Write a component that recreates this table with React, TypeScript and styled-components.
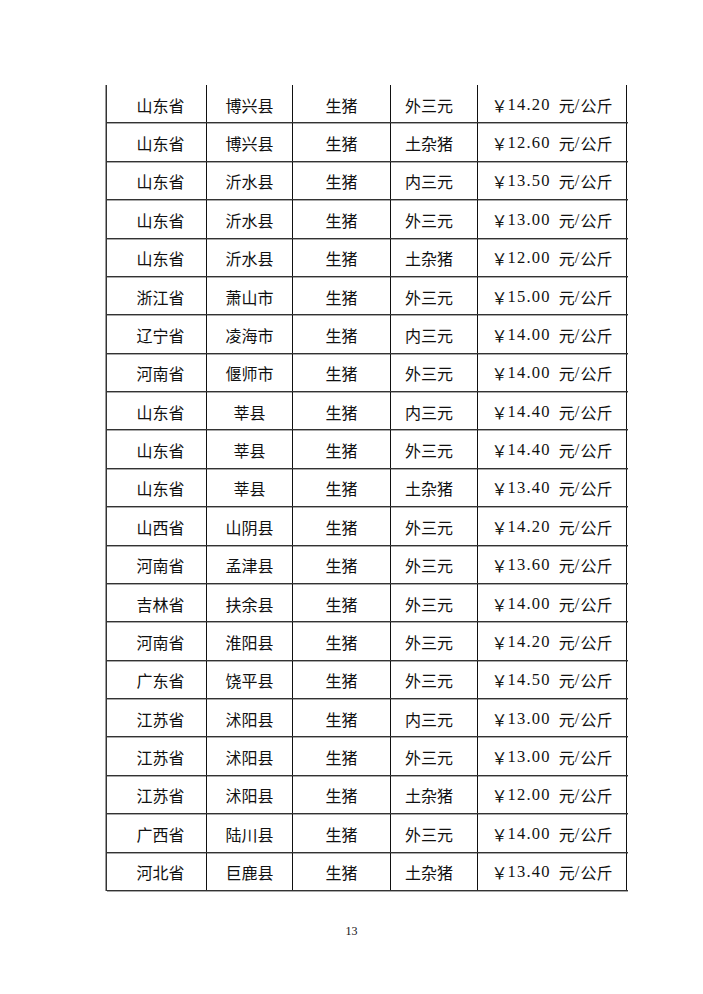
import styled, { createGlobalStyle } from "styled-components";

const GlobalStyle = createGlobalStyle`
  html, body {
    margin: 0;
    padding: 0;
    background: #ffffff;
  }
`;

type Row = [string, string, string, string, string];

const rows: Row[] = [
  ["山东省", "博兴县", "生猪", "外三元", "14.20"],
  ["山东省", "博兴县", "生猪", "土杂猪", "12.60"],
  ["山东省", "沂水县", "生猪", "内三元", "13.50"],
  ["山东省", "沂水县", "生猪", "外三元", "13.00"],
  ["山东省", "沂水县", "生猪", "土杂猪", "12.00"],
  ["浙江省", "萧山市", "生猪", "外三元", "15.00"],
  ["辽宁省", "凌海市", "生猪", "内三元", "14.00"],
  ["河南省", "偃师市", "生猪", "外三元", "14.00"],
  ["山东省", "莘县", "生猪", "内三元", "14.40"],
  ["山东省", "莘县", "生猪", "外三元", "14.40"],
  ["山东省", "莘县", "生猪", "土杂猪", "13.40"],
  ["山西省", "山阴县", "生猪", "外三元", "14.20"],
  ["河南省", "孟津县", "生猪", "外三元", "13.60"],
  ["吉林省", "扶余县", "生猪", "外三元", "14.00"],
  ["河南省", "淮阳县", "生猪", "外三元", "14.20"],
  ["广东省", "饶平县", "生猪", "外三元", "14.50"],
  ["江苏省", "沭阳县", "生猪", "内三元", "13.00"],
  ["江苏省", "沭阳县", "生猪", "外三元", "13.00"],
  ["江苏省", "沭阳县", "生猪", "土杂猪", "12.00"],
  ["广西省", "陆川县", "生猪", "外三元", "14.00"],
  ["河北省", "巨鹿县", "生猪", "土杂猪", "13.40"],
];

const Page = styled.div`
  width: 703px;
  height: 994px;
  padding-top: 85px;
  box-sizing: border-box;
  display: flex;
  flex-direction: column;
  align-items: flex-start;
`;

const Table = styled.div`
  margin-left: 106px;
  width: 521px;
  border-left: 1px solid #333;
  box-shadow: -1px 0 0 #9a9a9a;
  display: flex;
  flex-direction: column;
`;

const TableRow = styled.div`
  display: grid;
  grid-template-columns: 100px 86px 98px 87px 149px;
  height: 38.38px;
  border-bottom: 1px solid #333;
  box-shadow: 0 1px 0 #a8a8a8;
  box-sizing: border-box;
`;

const Cell = styled.div<{ $left?: number; $right?: number }>`
  display: flex;
  align-items: center;
  justify-content: center;
  border-right: 1px solid #111;
  font-family: "Noto Sans CJK SC", sans-serif;
  font-size: 16px;
  color: #111;
  padding-top: 2px;
  padding-left: ${(p) => p.$left ?? 0}px;
  padding-right: ${(p) => p.$right ?? 0}px;
  box-sizing: border-box;
  white-space: nowrap;
`;

const Num = styled.span`
  font-family: "Liberation Serif", serif;
  font-size: 16.5px;
  letter-spacing: 1.2px;
`;

const Gap = styled.span`
  display: inline-block;
  width: 8px;
`;

const PageNumber = styled.div`
  width: 703px;
  text-align: center;
  margin-top: 33px;
  font-family: "Liberation Serif", serif;
  font-size: 12px;
  color: #111;
`;

const App = () => {
  return (
    <>
      <GlobalStyle />
      <Page>
        <Table>
          {rows.map((r, i) => (
            <TableRow key={i}>
              <Cell $left={8}>{r[0]}</Cell>
              <Cell>{r[1]}</Cell>
              <Cell>{r[2]}</Cell>
              <Cell $right={10}>{r[3]}</Cell>
              <Cell>
                ￥<Num>{r[4]}</Num>
                <Gap />元<Num>/</Num>公斤
              </Cell>
            </TableRow>
          ))}
        </Table>
        <PageNumber>13</PageNumber>
      </Page>
    </>
  );
};

export default App;
